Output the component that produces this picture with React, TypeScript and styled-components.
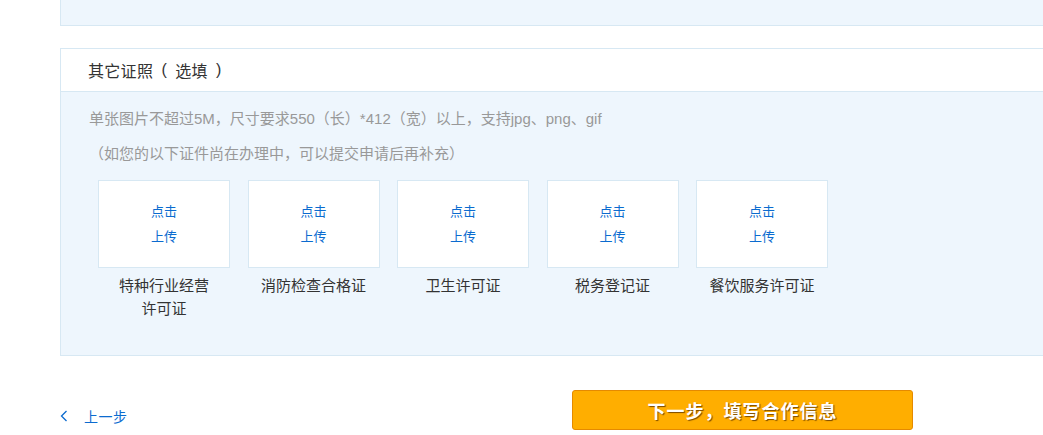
import React from "react";
import styled, { createGlobalStyle } from "styled-components";

const GlobalStyle = createGlobalStyle`
    html, body {
        margin: 0;
        padding: 0;
        background: #ffffff;
        overflow: hidden;
    }
    body {
        font-family: "Liberation Sans", "Noto Sans CJK SC", sans-serif;
        color: #333333;
        text-spacing-trim: space-all;
    }
`;

const Page = styled.div`
    width: 1200px;
    padding-left: 60px;
`;

const TopPanel = styled.div`
    height: 25px;
    background: #eef6fd;
    border: 1px solid #d7e8f3;
    border-top: none;
`;

const Panel = styled.section`
    margin-top: 22px;
    border: 1px solid #d7e8f3;
    background: #eef6fd;
`;

const PanelHeader = styled.div`
    height: 42px;
    display: flex;
    align-items: center;
    padding-left: 27px;
    background: #ffffff;
    border-bottom: 1px solid #d7e8f3;
    font-size: 16px;
    letter-spacing: 0.3px;
    color: #333333;
`;

const Paren = styled.span`
    display: inline-block;
    width: 22px;
    text-align: center;
`;

const PanelBody = styled.div`
    padding: 9px 0 35px 28px;
`;

const Note = styled.p`
    margin: 0;
    line-height: 35px;
    font-size: 15px;
    color: #999999;
`;

const CardRow = styled.div`
    display: flex;
    gap: 17.5px;
    margin-top: 9px;
    padding-left: 9px;
`;

const Card = styled.div`
    width: 132px;
    display: flex;
    flex-direction: column;
    align-items: center;
`;

const UploadBox = styled.button`
    width: 132px;
    height: 88px;
    box-sizing: border-box;
    border: 1px solid #d7e8f3;
    background: #ffffff;
    display: flex;
    flex-direction: column;
    align-items: center;
    justify-content: center;
    padding: 0;
    cursor: pointer;
    font-family: inherit;
    font-size: 13px;
    line-height: 25px;
    color: #0b6bcf;
`;

const CardLabel = styled.div`
    margin-top: 6px;
    font-size: 15px;
    line-height: 23px;
    color: #333333;
    text-align: center;
`;

const Footer = styled.div`
    display: flex;
    align-items: flex-end;
    margin-top: 34px;
`;

const BackLink = styled.a`
    flex-shrink: 0;
    width: 68px;
    white-space: nowrap;
    display: flex;
    align-items: center;
    gap: 16px;
    margin-bottom: 4px;
    font-size: 14px;
    letter-spacing: 0.5px;
    color: #0b6bcf;
    text-decoration: none;
    cursor: pointer;
`;

const NextButton = styled.button`
    flex-shrink: 0;
    margin-left: 444px;
    width: 341px;
    height: 40px;
    box-sizing: border-box;
    border: 1px solid #e58a00;
    border-radius: 3px;
    background: #ffae00;
    color: #ffffff;
    font-family: "Noto Sans CJK SC", sans-serif;
    font-weight: bold;
    font-size: 18px;
    letter-spacing: 1px;
    text-shadow: 1px 1px 1px #7a4a00;
    cursor: pointer;
`;

const certs: string[][] = [
    ["特种行业经营", "许可证"],
    ["消防检查合格证"],
    ["卫生许可证"],
    ["税务登记证"],
    ["餐饮服务许可证"],
];

const App = () => {
    return (
        <Page>
            <GlobalStyle />
            <TopPanel />
            <Panel>
                <PanelHeader>
                    其它证照<Paren>(</Paren>选填<Paren>)</Paren>
                </PanelHeader>
                <PanelBody>
                    <Note>单张图片不超过5M，尺寸要求550（长）*412（宽）以上，支持jpg、png、gif</Note>
                    <Note>（如您的以下证件尚在办理中，可以提交申请后再补充）</Note>
                    <CardRow>
                        {certs.map((lines) => (
                            <Card key={lines.join("")}>
                                <UploadBox>
                                    <span>点击</span>
                                    <span>上传</span>
                                </UploadBox>
                                <CardLabel>
                                    {lines.map((l, i) => (
                                        <div key={i}>{l}</div>
                                    ))}
                                </CardLabel>
                            </Card>
                        ))}
                    </CardRow>
                </PanelBody>
            </Panel>
            <Footer>
                <BackLink>
                    <svg width="8" height="12" viewBox="0 0 8 12">
                        <path d="M6.5 1 L1.5 6 L6.5 11" fill="none" stroke="#0b6bcf" strokeWidth="1.3" />
                    </svg>
                    <span>上一步</span>
                </BackLink>
                <NextButton>下一步，填写合作信息</NextButton>
            </Footer>
        </Page>
    );
};

export default App;
